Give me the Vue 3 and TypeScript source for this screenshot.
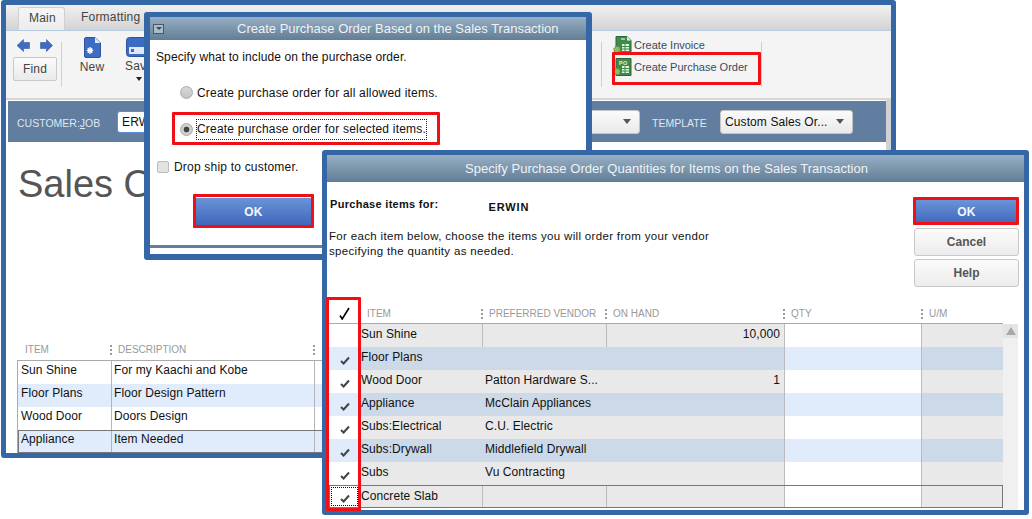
<script setup lang="ts">
interface LineItem { item: string; vendor: string; onHand: string }
const mainRows: [string, string][] = [
  ['Sun Shine', 'For my Kaachi and Kobe'],
  ['Floor Plans', 'Floor Design Pattern'],
  ['Wood Door', 'Doors Design'],
  ['Appliance', 'Item Needed'],
]
const poRows: LineItem[] = [
  { item: 'Sun Shine', vendor: '', onHand: '10,000' },
  { item: 'Floor Plans', vendor: '', onHand: '' },
  { item: 'Wood Door', vendor: 'Patton Hardware S...', onHand: '1' },
  { item: 'Appliance', vendor: 'McClain Appliances', onHand: '' },
  { item: 'Subs:Electrical', vendor: 'C.U. Electric', onHand: '' },
  { item: 'Subs:Drywall', vendor: 'Middlefield Drywall', onHand: '' },
  { item: 'Subs', vendor: 'Vu Contracting', onHand: '' },
  { item: 'Concrete Slab', vendor: '', onHand: '' },
]
const poHeads = ['ITEM', 'PREFERRED VENDOR', 'ON HAND', 'QTY', 'U/M']
</script>

<template>
  <div class="desktop">
    <section class="win main-win">
      <div class="tabs">
        <span class="tab active">Main</span>
        <span class="tab">Formatting</span>
      </div>
      <div class="ribbon">
        <div class="nav">
          <div class="arrows">
            <svg width="13" height="13" viewBox="0 0 13 13"><path d="M0 6.5 6.5 0.5V3.5H12.5V9.5H6.5V12.5Z" fill="#3f6cc0" stroke="#2f5aa8" stroke-width=".6" /></svg>
            <svg width="13" height="13" viewBox="0 0 13 13"><path d="M12.5 6.5 6.5 0.5V3.5H0.5V9.5H6.5V12.5Z" fill="#3f6cc0" stroke="#2f5aa8" stroke-width=".6" /></svg>
          </div>
          <button class="find">Find</button>
        </div>
        <div class="sep"></div>
        <div class="tool new">
          <svg width="17" height="21" viewBox="0 0 17 21"><path d="M1.5 .5H11L16.5 6V19a1.5 1.5 0 0 1-1.5 1.5H2A1.5 1.5 0 0 1 .5 19V2A1.5 1.5 0 0 1 1.5 .5Z" fill="#3d6cc4" stroke="#2c549f" /><path d="M11 .5V6H16.5Z" fill="#dfe8f5" /><path d="M6 10v7M2.8 13.5h6.4M3.8 11.2l4.4 4.6M8.2 11.2l-4.4 4.6" stroke="#fff" stroke-width="1.3" /></svg>
          <span>New</span>
        </div>
        <div class="tool save">
          <svg width="26" height="20" viewBox="0 0 26 20"><rect x=".5" y=".5" width="25" height="19" rx="3" fill="#3d6cc4" stroke="#2c549f" /><rect x="3" y="10" width="20" height="7" fill="#dfe8f5" /><rect x="5" y="12" width="3" height="3" fill="#3d6cc4" /></svg>
          <span>Save</span>
          <i class="mini-caret"></i>
        </div>
        <div class="sep sep-right"></div>
        <div class="creates">
          <div class="create">
            <svg width="19" height="18" viewBox="0 0 19 18">
              <path d="M3 .5H14L18 4.5V17.5H3Z" fill="#3f8a4b" stroke="#2a6a36" />
              <path d="M14 .5V4.5H18Z" fill="#e4f0e4" />
              <path d="M8 3h4" stroke="#fff" />
              <rect x="9" y="8" width="7" height="7" fill="#e6f2e6" />
              <path d="M9 10.5h7M9 13h7M12 8v7" stroke="#3f8a4b" />
              <circle cx="4" cy="13.5" r="3.2" fill="#8dbb5d" stroke="#4f8a3a" stroke-dasharray="1.5 1" />
            </svg>
            <span>Create Invoice</span>
          </div>
          <div class="create">
            <svg width="19" height="18" viewBox="0 0 19 18">
              <path d="M3 .5H18V17.5H3Z" fill="#3f8a4b" stroke="#2a6a36" />
              <text x="6" y="6.5" class="po">PO</text>
              <rect x="9" y="8" width="7" height="7" fill="#e6f2e6" />
              <path d="M9 10.5h7M9 13h7M12 8v7" stroke="#3f8a4b" />
              <circle cx="4" cy="13.5" r="3.2" fill="#8dbb5d" stroke="#4f8a3a" stroke-dasharray="1.5 1" />
            </svg>
            <span>Create Purchase Order</span>
          </div>
        </div>
        <div class="sep"></div>
      </div>
      <div class="lower">
        <div class="customer-bar">
          <span class="bar-label">CUSTOMER:<u>J</u>OB</span>
          <div class="customer-input">ERWIN</div>
          <div class="combo class-combo"><i class="caret"></i></div>
          <span class="bar-label template">TEMPLATE</span>
          <div class="combo template-combo"><span>Custom Sales Or...</span><i class="caret"></i></div>
        </div>
        <h1 class="sales-title">Sales Order</h1>
        <div class="main-table">
          <div class="main-head">
            <span>ITEM</span>
            <span><i class="dots"></i>DESCRIPTION</span>
            <span><i class="dots"></i></span>
          </div>
          <div class="main-body">
            <div v-for="(r, i) in mainRows" :key="r[0]" class="main-row" :class="{ alt: i % 2 === 1, current: i === 3 }">
              <span>{{ r[0] }}</span>
              <span>{{ r[1] }}</span>
              <span></span>
            </div>
          </div>
        </div>
      </div>
    </section>

    <section class="win dlg-one">
      <header class="title one-title">
        <span class="sys"><i></i></span>
        <span>Create Purchase Order Based on the Sales Transaction</span>
      </header>
      <div class="one-body">
        <p class="one-desc">Specify what to include on the purchase order.</p>
        <label class="radio-row first"><i class="radio"></i><span>Create purchase order for all allowed items.</span></label>
        <label class="radio-row second"><i class="radio on"></i><span class="focus">Create purchase order for selected items.</span></label>
        <label class="check-row"><i class="box"></i><span>Drop ship to customer.</span></label>
        <button class="primary one-ok">OK</button>
      </div>
      <div class="one-rule"></div>
    </section>

    <section class="win dlg-two">
      <header class="title two-title">Specify Purchase Order Quantities for Items on the Sales Transaction</header>
      <div class="two-head">
        <div class="two-info">
          <div class="for-line"><b>Purchase items for:</b><b class="erwin">ERWIN</b></div>
          <p>For each item below, choose the items you will order from your vendor<br />specifying the quantity as needed.</p>
        </div>
        <div class="two-buttons">
          <button class="primary two-ok">OK</button>
          <button class="plain">Cancel</button>
          <button class="plain">Help</button>
        </div>
      </div>
      <div class="po-wrap">
        <div class="po-table">
          <div class="po-grid po-head">
            <span class="head-check">
              <svg width="11" height="13" viewBox="0 0 11 13"><path d="M1 8.5 3.2 12 10 1" fill="none" stroke="#000" stroke-width="1.6" /></svg>
            </span>
            <span v-for="h in poHeads" :key="h"><i class="dots"></i>{{ h }}</span>
          </div>
          <div
            v-for="(r, i) in poRows"
            :key="r.item"
            class="po-grid po-row"
            :class="{ alt: i % 2 === 1 && i < 7, lined: i === 0 || i === 7, current: i === 7 }"
          >
            <span class="c-check" :class="{ focused: i === 7 }">
              <svg v-if="i > 0" width="10" height="9" viewBox="0 0 10 9"><path d="M1 5 3.6 7.5 9 1.5" fill="none" stroke="#444" stroke-width="2" /></svg>
            </span>
            <span class="c-gray">{{ r.item }}</span>
            <span class="c-gray c-vendor">{{ r.vendor }}</span>
            <span class="c-gray num">{{ r.onHand }}</span>
            <span class="c-qty"></span>
            <span class="c-um"></span>
          </div>
        </div>
        <div class="scroll"><div class="scroll-up"><i></i></div></div>
      </div>
    </section>

    <div class="mark mark-po"></div>
    <div class="mark mark-radio"></div>
    <div class="mark mark-ok1"></div>
    <div class="mark mark-ok2"></div>
    <div class="mark mark-col"></div>
  </div>
</template>

<style>
body { background: #fff; overflow: hidden; }
</style>

<style scoped>
.desktop {
  position: relative;
  width: 1032px;
  height: 519px;
  overflow: hidden;
  background: #fff;
  color: #111;
  font: 12px/16px "Liberation Sans", Arial, sans-serif;
  letter-spacing: .2px;
}
p, h1 { margin: 0; }
i { font-style: normal; display: block; }
button { font-family: inherit; letter-spacing: inherit; cursor: default; padding: 0; }
.win {
  position: absolute;
  box-sizing: border-box;
  border: 5px solid #3566a5;
  border-radius: 3px;
  background: #fff;
  overflow: hidden;
  display: flex;
  flex-direction: column;
}
.main-win { left: 1px; top: 0; width: 895px; height: 458px; }
.dlg-one { left: 144px; top: 12px; width: 448px; height: 248px; border-width: 5px 6px 6px 6px; }
.dlg-two { left: 322px; top: 150px; width: 707px; height: 365px; }

.tabs {
  height: 26px;
  flex: none;
  box-sizing: border-box;
  background: linear-gradient(#f1f1f1, #d3d3d3);
  border-bottom: 1px solid #b4cbe2;
  display: flex;
  align-items: flex-end;
  padding-left: 12px;
  color: #444;
}
.tab { height: 23px; line-height: 20px; padding: 0 10px; margin-right: 6px; }
.tab.active {
  width: 47px;
  box-sizing: border-box;
  text-align: center;
  background: linear-gradient(#f6f6f6, #ececec);
  border: 1px solid #d0d0d0;
  border-bottom: 0;
  border-radius: 3px 3px 0 0;
}
.ribbon {
  height: 69px;
  flex: none;
  box-sizing: border-box;
  background: #f4f4f4;
  border-bottom: 2px solid #d6d6d6;
  display: flex;
  padding-left: 7px;
  color: #444;
}
.nav { width: 44px; display: flex; flex-direction: column; align-items: center; }
.arrows { display: flex; justify-content: center; gap: 10px; margin-top: 8px; height: 13px; }
.find {
  margin-top: 5px;
  width: 44px;
  height: 24px;
  color: #444;
  font-size: 12px;
  font-weight: 400;
  background: linear-gradient(#fafafa, #eaeaea);
  border: 1px solid #c9c9c9;
  border-radius: 2px;
}
.sep { width: 1px; height: 45px; background: #d0d0d0; margin: 11px 0 0 4px; flex: none; }
.tool { display: flex; flex-direction: column; align-items: center; margin-top: 6px; color: #444; }
.tool svg { display: block; flex: none; }
.tool span { margin-top: 1px; }
.new { width: 32px; margin-left: 14px; }
.save { width: 32px; margin-left: 15px; }
.mini-caret { width: 0; height: 0; border: 3px solid transparent; border-top: 4px solid #222; border-bottom: 0; margin-top: 3px; }
.sep.sep-right { margin-left: 446px; }
.creates { width: 155px; padding: 3px 0 0 11px; box-sizing: border-box; }
.create { display: flex; align-items: center; gap: 2px; height: 22px; color: #3c4a5c; white-space: nowrap; letter-spacing: 0; font-size: 11px; }
.create svg { flex: none; }
.po { font: 700 5.5px "Liberation Sans", sans-serif; fill: #dff0df; letter-spacing: .3px; }

.lower { flex: 1; min-height: 0; border-right: 5px solid #d2d2d2; display: flex; flex-direction: column; }
.customer-bar {
  height: 41px;
  flex: none;
  margin: 1px 0 0 2px;
  background: #617d9f;
  display: flex;
  align-items: center;
}
.bar-label { color: #dfe8f0; font-size: 10.5px; letter-spacing: 0; padding-top: 3px; }
.bar-label:first-child { margin-left: 9px; width: 100px; }
.customer-input {
  width: 100px;
  height: 22px;
  box-sizing: border-box;
  background: #fff;
  border: 1px solid #5b8fd6;
  border-radius: 3px;
  line-height: 20px;
  padding-left: 4px;
  color: #111;
}
.combo {
  height: 24px;
  box-sizing: border-box;
  background: linear-gradient(#fbfbfb, #e9e9e9);
  border: 1px solid #c4c4c4;
  border-radius: 3px;
  display: flex;
  align-items: center;
  justify-content: flex-end;
  padding: 0 5px;
  color: #111;
  letter-spacing: .1px;
}
.class-combo { width: 423px; }
.caret { width: 0; height: 0; border: 4px solid transparent; border-top: 5px solid #555; border-bottom: 0; margin-right: 3px; }
.template { margin-left: 12px; width: 68px; }
.template-combo { width: 133px; justify-content: space-between; padding-left: 4px; }
.sales-title {
  font-size: 38px;
  font-weight: 400;
  line-height: 44px;
  letter-spacing: 0;
  color: #555;
  margin: 20px 0 0 12px;
  width: 127px;
  height: 44px;
  white-space: nowrap;
  overflow: hidden;
  flex: none;
}
.main-table { margin: 137px 0 0 11px; }
.main-head, .main-row { display: grid; grid-template-columns: 94px 203px 1fr; }
.main-head { height: 17px; align-items: flex-start; font-size: 10px; letter-spacing: 0; color: #999; }
.main-head span { display: flex; align-items: center; gap: 6px; padding-left: 8px; height: 14px; }
.main-head span + span { padding-left: 0; margin-left: -1px; }
.dots { width: 2px; height: 10px; background: repeating-linear-gradient(#999 0 2px, transparent 2px 4px); flex: none; }
.main-body { border-top: 1px solid #aaa; border-left: 1px solid #aaa; }
.main-row { height: 23px; line-height: 19px; letter-spacing: .08px; }
.main-row.alt { background: #e0ecfb; }
.main-row.current { outline: 1px solid #777; outline-offset: -1px; }
.main-row span { padding-left: 3px; border-right: 1px solid #b5b5b5; }
.main-row span + span { padding-left: 2px; }

.title {
  flex: none;
  background: linear-gradient(#97afc3, #627d96);
  color: #eef3f7;
}
.one-title { height: 23px; font-size: 13px; letter-spacing: 0; display: flex; align-items: center; padding-left: 3px; }
.sys { width: 11px; height: 10px; box-sizing: border-box; border: 1px solid #46586a; background: #a9bccb; margin-right: 73px; display: flex; align-items: center; justify-content: center; flex: none; }
.sys i { width: 0; height: 0; border: 3px solid transparent; border-top: 3px solid #444; border-bottom: 0; }
.one-body { flex: 1; min-height: 0; padding: 9px 0 0 6px; }
.one-desc { letter-spacing: .1px; }
.radio-row { display: flex; align-items: center; height: 19px; padding-left: 24px; }
.radio-row.first { margin-top: 18px; }
.radio-row.second { margin-top: 18px; }
.radio {
  width: 13px; height: 13px; border-radius: 50%;
  box-sizing: border-box;
  border: 1px solid #a9a9a9;
  background: linear-gradient(#d8d8d8, #c4c4c4);
  margin-right: 4px;
  flex: none;
}
.radio.on { background: radial-gradient(circle, #444 0 2.6px, #cfcfcf 3.2px); }
.focus { outline: 1px dotted #222; padding: 1px 0; line-height: 17px; }
.check-row { display: flex; align-items: center; gap: 5px; margin-top: 20px; height: 16px; padding-left: 1px; }
.box { width: 12px; height: 12px; border: 1px solid #bcbcbc; border-radius: 2px; background: #e2e2e2; box-sizing: border-box; }
.primary {
  color: #f4f7fc;
  font-weight: 700;
  font-size: 12px;
  background: linear-gradient(#6a94d8, #3f66bb);
  border: 0;
  border-radius: 1px;
}
.one-ok { display: block; width: 117px; height: 28px; margin: 23px 0 0 39px; border-bottom: 1px solid #a9bfe2; }
.one-rule { height: 3px; background: #657f96; flex: none; margin-bottom: 6px; }

.two-title { height: 27px; line-height: 28px; font-size: 13px; letter-spacing: .03px; text-align: center; padding-right: 18px; }
.two-head { height: 122px; flex: none; display: flex; justify-content: space-between; }
.two-info { padding: 14px 0 0 3px; }
.for-line { display: flex; align-items: flex-start; height: 33px; font-size: 11px; }
.for-line b { letter-spacing: .3px; }
.for-line .erwin { margin-left: 50px; margin-top: 3px; letter-spacing: .9px; }
.two-info p { line-height: 15px; font-size: 11.5px; letter-spacing: .33px; margin-left: -1px; }
.two-buttons { width: 105px; margin-right: 5px; padding-top: 18px; display: flex; flex-direction: column; }
.two-ok { height: 24px; margin: 0 0 4px 1px; width: 103px; }
.plain {
  height: 28px;
  margin-bottom: 3px;
  font-size: 12px;
  font-weight: 700;
  letter-spacing: 0;
  color: #555;
  background: linear-gradient(#fbfbfb, #ececec);
  border: 1px solid #c8c8c8;
  border-radius: 3px;
}
.po-wrap { display: flex; padding-left: 2px; flex: 1; min-height: 0; }
.po-table { width: 674px; flex: none; }
.po-grid { display: grid; grid-template-columns: 31px 122px 124px 178px 138px 81px; }
.po-head {
  height: 20px;
  box-sizing: border-box;
  border-bottom: 1px solid #aaa;
  font-size: 10px;
  letter-spacing: 0;
  color: #999;
  align-items: center;
}
.po-head span { display: flex; align-items: center; gap: 6px; margin-left: -1px; }
.po-head .head-check { justify-content: center; margin-left: 5px; width: 20px; }
.po-row { height: 23px; line-height: 20px; letter-spacing: .08px; }
.po-row span { padding-left: 1px; }
.po-row .c-vendor { padding-left: 3px; }
.po-row.current { line-height: 22px; }
.c-check { background: #fff; display: flex; align-items: center; justify-content: center; padding-top: 3px; box-sizing: border-box; }
.c-gray { background: #e9e9e9; }
.c-qty { background: #fff; border-left: 1px solid #bbb; border-right: 1px solid #bbb; }
.c-um { background: #e9e9e9; }
.alt .c-check, .alt .c-qty { background: #e0ecfb; }
.alt .c-gray, .alt .c-um { background: #ccd9e8; }
.num { text-align: right; padding-right: 4px; }
.lined .c-gray + .c-gray { border-left: 1px solid #bbb; }
.current { outline: 1px solid #777; outline-offset: -1px; }
.focused { outline: 1px dotted #111; outline-offset: -3px; }
.scroll { width: 15px; background: #f0f0f0; margin-top: 20px; flex: none; }
.scroll-up { height: 14px; background: #e4e4e4; display: flex; align-items: center; justify-content: center; }
.scroll-up i { width: 0; height: 0; border: 5px solid transparent; border-bottom: 8px solid #a8a8a8; border-top: 0; }

.mark { position: absolute; border: 3px solid #f00f15; box-sizing: border-box; border-radius: 1px; }
.mark-po { left: 612px; top: 52px; width: 149px; height: 33px; }
.mark-radio { left: 172px; top: 112px; width: 268px; height: 33px; }
.mark-ok1 { left: 193px; top: 194px; width: 121px; height: 34px; }
.mark-ok2 { left: 913px; top: 197px; width: 106px; height: 28px; }
.mark-col { left: 326px; top: 297px; width: 35px; height: 214px; }
</style>
